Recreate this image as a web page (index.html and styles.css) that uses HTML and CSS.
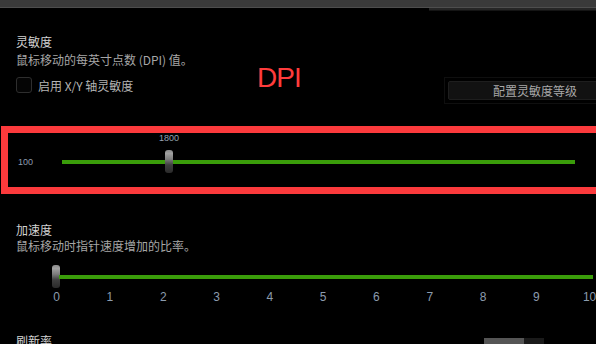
FILE: index.html
```html
<!DOCTYPE html>
<html lang="zh-CN">
<head>
<meta charset="utf-8">
<title>灵敏度</title>
<link rel="stylesheet" href="styles.css">
</head>
<body>
<div class="screen">
  <div class="topbar"></div>
  <div class="topstrip-row"><div class="topstrip"></div></div>

  <section class="sens">
    <div class="title">灵敏度</div>
    <div class="desc sens-desc">鼠标移动的每英寸点数 (DPI) 值。</div>
    <div class="opt-row">
      <label class="check">
        <span class="box"></span>
        <span class="check-label">启用 X/Y 轴灵敏度</span>
      </label>
      <div class="btn-frame"><div class="btn">配置灵敏度等级</div></div>
    </div>
  </section>

  <div class="note">DPI</div>

  <div class="redbox">
    <div class="dpi-row">
      <span class="min">100</span>
      <div class="track dpi-track">
        <span class="value">1800</span>
        <span class="thumb dpi-thumb"></span>
      </div>
    </div>
  </div>

  <section class="accel">
    <div class="title">加速度</div>
    <div class="desc">鼠标移动时指针速度增加的比率。</div>
    <div class="acc-slider">
      <span class="thumb acc-thumb"></span>
      <div class="track acc-track"></div>
    </div>
    <div class="ticks">
      <span>0</span><span>1</span><span>2</span><span>3</span><span>4</span><span>5</span><span>6</span><span>7</span><span>8</span><span>9</span><span>10</span>
    </div>
  </section>

  <section class="refresh">
    <div class="title">刷新率</div>
    <div class="seg"><span class="seg-on"></span><span class="seg-off"></span></div>
  </section>
</div>
</body>
</html>
```
FILE: styles.css
```css
html, body {
  margin: 0;
  padding: 0;
  background: #000;
}
.screen {
  position: relative;
  width: 596px;
  height: 344px;
  overflow: hidden;
  background: #000;
  font-family: "Noto Sans CJK SC", "Noto Sans", sans-serif;
}
.topbar {
  height: 7px;
  background: #3a3a3a;
  border-bottom: 1px solid #4e4e4e;
}
.topstrip-row {
  display: flex;
  justify-content: flex-end;
  height: 3px;
}
.topstrip {
  width: 167px;
  height: 2px;
  background: #262626;
  border-bottom: 1px solid #141414;
}
.title {
  font-size: 12px;
  line-height: 16px;
  color: #d2d2d2;
}
.desc {
  font-size: 12px;
  line-height: 16px;
  color: #a6a6a6;
}
.sens {
  margin-top: 23px;
  padding-left: 16px;
}
.sens-desc {
  margin-top: 2px;
}
.opt-row {
  display: flex;
  align-items: flex-start;
  margin-top: 9px;
}
.check {
  display: flex;
  align-items: center;
  gap: 6px;
  height: 16px;
}
.box {
  width: 14px;
  height: 14px;
  border: 1px solid #2e2e2e;
  border-radius: 3px;
  background: #050505;
}
.check-label {
  font-size: 12px;
  color: #b4b4b4;
}
.btn-frame {
  flex: none;
  margin-left: auto;
  margin-right: -30px;
  width: 174px;
  padding: 3px;
  border: 1px solid #0f0f0f;
}
.btn {
  height: 17px;
  line-height: 17px;
  background: #121212;
  border: 1px solid #1e1e1e;
  border-radius: 2px;
  font-size: 12px;
  color: #a8a8a8;
  text-align: center;
}
.note {
  position: absolute;
  left: 257px;
  top: 62px;
  font-family: "Liberation Sans", Arial, sans-serif;
  font-size: 28px;
  line-height: 32px;
  letter-spacing: -1px;
  color: #ff3c3c;
}
.redbox {
  margin-top: 22px;
  margin-left: 1px;
  width: 620px;
  height: 54px;
  border: 7px solid #fc3a3c;
  border-right: none;
}
.dpi-row {
  display: flex;
  align-items: center;
  height: 50px;
  padding-top: 4px;
  padding-left: 10px;
}
.min {
  width: 44px;
  font-family: "Liberation Sans", Arial, sans-serif;
  font-size: 9px;
  color: #8d9cb0;
}
.track {
  position: relative;
  height: 4px;
  background: #3a9c0a;
}
.dpi-track {
  width: 513px;
}
.thumb {
  display: block;
  width: 8px;
  height: 23px;
  border-radius: 3px;
  background: linear-gradient(#8a8a8a, #a0a0a0 15%, #7c7c7c 40%, #3e3e3e 65%, #2a2a2a);
}
.dpi-thumb {
  position: absolute;
  left: 103px;
  top: -10px;
}
.value {
  position: absolute;
  left: 97px;
  top: -27px;
  width: 20px;
  text-align: center;
  font-family: "Liberation Sans", Arial, sans-serif;
  font-size: 9px;
  line-height: 11px;
  color: #97a3b3;
}
.accel {
  margin-top: 28px;
  padding-left: 16px;
}
.acc-slider {
  display: flex;
  align-items: center;
  margin-top: 11px;
  padding-left: 36px;
  height: 23px;
}
.acc-track {
  flex: none;
  width: 534px;
  margin-left: -1px;
}
.ticks {
  display: grid;
  grid-template-columns: repeat(11, 53.3px);
  margin-left: 14px;
  margin-top: 2px;
  font-family: "Liberation Sans", Arial, sans-serif;
  font-size: 12px;
  line-height: 14px;
  color: #8c9cae;
}
.ticks span {
  text-align: center;
}
.refresh {
  display: flex;
  align-items: flex-start;
  margin-top: 29px;
  padding-left: 16px;
}
.seg {
  display: flex;
  margin-left: 432px;
  margin-top: 5px;
}
.seg-on {
  width: 40px;
  height: 8px;
  background: #555;
}
.seg-off {
  width: 20px;
  height: 8px;
  background: #1a1a1a;
}
```
